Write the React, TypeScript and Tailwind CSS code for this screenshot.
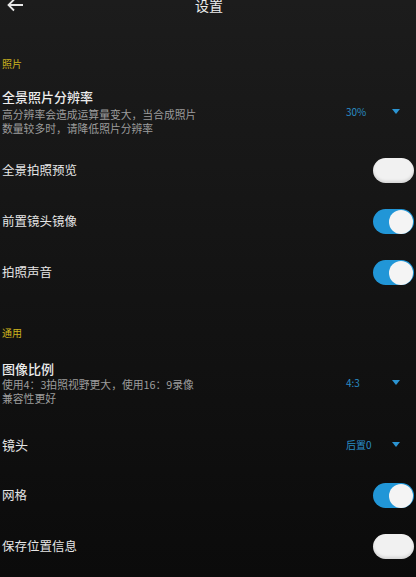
import React from "react";

function Toggle({ on }: { on: boolean }) {
  if (!on) {
    return (
      <div className="w-[41px] h-[25px] rounded-full bg-[#f1f1f1] shadow-[inset_0_-2px_3px_rgba(0,0,0,0.12)]" />
    );
  }
  return (
    <div className="w-[41px] h-[25px] rounded-full bg-[#2196d7] flex items-center justify-end pr-[1px]">
      <div className="w-[24px] h-[24px] rounded-full bg-[#f4f4f4]" />
    </div>
  );
}

function Caret() {
  return (
    <svg width="8" height="5" viewBox="0 0 8 5" className="block">
      <path d="M0 0 L8 0 L4 5 Z" fill="#2b94d2" />
    </svg>
  );
}

function Dropdown({ value }: { value: string }) {
  return (
    <div className="flex items-center pr-[16px] shrink-0">
      <span className="w-[46px] text-[10px] text-[#2a8dc6] leading-none">{value}</span>
      <Caret />
    </div>
  );
}

function SectionLabel({ text, className }: { text: string; className: string }) {
  return (
    <div className={"h-[20px] leading-[20px] text-[10px] text-[#cdb41e] " + className}>{text}</div>
  );
}

function ToggleRow({ label, on }: { label: string; on: boolean }) {
  return (
    <div className="h-[51px] flex items-center justify-between pr-[2px]">
      <span className="text-[12.5px] text-[#e6e6e6]">{label}</span>
      <Toggle on={on} />
    </div>
  );
}

export default function App() {
  return (
    <div
      className="w-[416px] h-[577px] overflow-hidden bg-gradient-to-b from-[#1c1c1c] to-[#0b0b0b] pl-[2px]"
      style={{ fontFamily: '"Noto Sans CJK SC", "Noto Sans", sans-serif' }}
    >
      {/* header */}
      <div className="h-[10px] flex items-center relative">
        <svg width="17" height="14" viewBox="0 0 17 14" className="ml-[5px]">
          <path d="M16 7 H2 M7 1.5 L1.5 7 L7 12.5" stroke="#e8e8e8" strokeWidth="1.8" fill="none" />
        </svg>
        <span className="absolute left-0 right-0 text-center text-[14px] text-[#ececec] leading-none pointer-events-none">
          设置
        </span>
      </div>

      <SectionLabel text="照片" className="mt-[44px]" />

      <div className="mt-[14px] flex items-center justify-between">
        <div>
          <div className="text-[13px] font-medium text-[#ececec] leading-[18px]">全景照片分辨率</div>
          <div className="mt-[2px] text-[10.8px] text-[#9c9c9c] leading-[13.5px]">
            高分辨率会造成运算量变大，当合成照片
            <br />
            数量较多时，请降低照片分辨率
          </div>
        </div>
        <Dropdown value="30%" />
      </div>

      <div className="mt-[10px]">
        <ToggleRow label="全景拍照预览" on={false} />
        <ToggleRow label="前置镜头镜像" on={true} />
        <ToggleRow label="拍照声音" on={true} />
      </div>

      <SectionLabel text="通用" className="mt-[25px]" />

      <div className="mt-[17px] flex items-center justify-between">
        <div>
          <div className="text-[13px] font-medium text-[#ececec] leading-[18px]">图像比例</div>
          <div className="mt-[0px] text-[10.8px] text-[#9c9c9c] leading-[13.5px]">
            使用4：3拍照视野更大，使用16：9录像
            <br />
            兼容性更好
          </div>
        </div>
        <Dropdown value="4:3" />
      </div>

      <div className="mt-[14px]">
        <div className="h-[51px] flex items-center justify-between">
          <span className="text-[13px] text-[#e6e6e6]">镜头</span>
          <Dropdown value="后置0" />
        </div>
        <div className="h-[51px] flex items-center justify-between pr-[2px]">
          <span className="text-[12.5px] text-[#e6e6e6]">网格</span>
          <Toggle on={true} />
        </div>
        <div className="h-[51px] flex items-center justify-between pr-[2px]">
          <span className="text-[12.5px] text-[#e6e6e6]">保存位置信息</span>
          <Toggle on={false} />
        </div>
      </div>
    </div>
  );
}
